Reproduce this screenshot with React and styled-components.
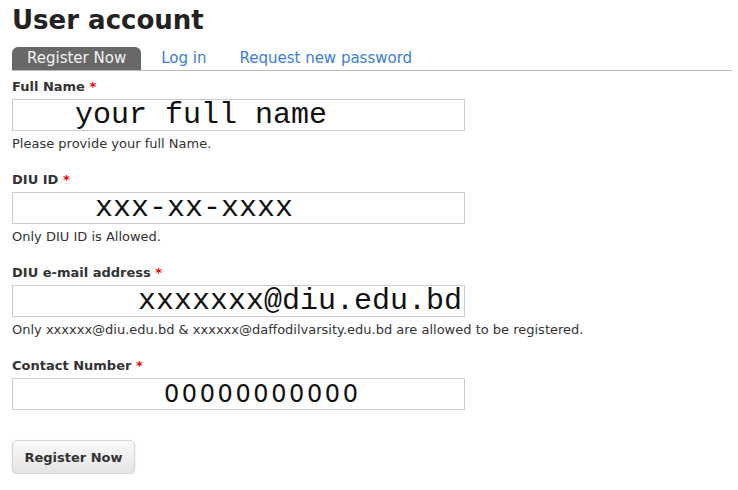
import React from "react";
import styled, { createGlobalStyle } from "styled-components";

const GlobalStyle = createGlobalStyle`
	body {
		margin: 0;
		background: #fff;
		font-family: "DejaVu Sans", Verdana, sans-serif;
		color: #333;
	}
`;

const Page = styled.div`
	width: 720px;
	padding: 0 6px 0 12px;
`;

const Title = styled.h1`
	margin: 0;
	padding-top: 3px;
	font-size: 26px;
	line-height: 34px;
	font-weight: bold;
	color: #222;
`;

const Tabs = styled.ul`
	display: flex;
	list-style: none;
	margin: 10px 0 0 0;
	padding: 0;
	border-bottom: 1px solid #bbb;
`;

const Tab = styled.li`
	height: 23px;
	margin-right: ${(p) => p.$gap}px;
	border-radius: 6px 6px 0 0;
	background: ${(p) => (p.$active ? "#686868" : "transparent")};
	color: ${(p) => (p.$active ? "#f2f2f2" : "#3b7dd8")};
	font-size: 15px;
	line-height: 23px;
	padding-left: ${(p) => (p.$active ? 15 : 5)}px;
	padding-right: ${(p) => (p.$active ? 15 : 0)}px;
`;

const Form = styled.form`
	display: flex;
	flex-direction: column;
	margin-top: 8px;
`;

const Item = styled.div`
	display: flex;
	flex-direction: column;
	margin-bottom: ${(p) => p.$after}px;
`;

const Label = styled.label`
	font-size: 13px;
	line-height: 16px;
	font-weight: bold;
	color: #333;
	margin-bottom: 4px;
`;

const Star = styled.span`
	color: #e00;
`;

const Field = styled.input`
	box-sizing: border-box;
	width: 453px;
	height: 32px;
	margin: 0;
	padding: 0 0 0 ${(p) => p.$indent}px;
	border: 1px solid #ccc;
	background: #fff;
	color: #111;
	font-family: ${(p) =>
		p.$sans ? '"DejaVu Sans", sans-serif' : '"Liberation Mono", "Courier New", monospace'};
	font-size: ${(p) => (p.$sans ? 24 : 30)}px;
	letter-spacing: ${(p) => (p.$sans ? 2.6 : 0)}px;
	outline: none;
`;

const Help = styled.div`
	margin-top: 5px;
	font-size: 13px;
	line-height: 16px;
	color: #333;
`;

const Button = styled.button`
	align-self: flex-start;
	width: 123px;
	height: 34px;
	padding: 0;
	border: 1px solid #d4d4d4;
	border-radius: 5px;
	background: linear-gradient(#fafafa, #e4e4e4);
	box-shadow: 0 1px 2px rgba(0, 0, 0, 0.12);
	font-family: "DejaVu Sans", Verdana, sans-serif;
	font-size: 13px;
	font-weight: bold;
	color: #333;
`;

const fields = [
	{ label: "Full Name", value: "your full name", indent: 62, help: "Please provide your full Name." },
	{ label: "DIU ID", value: "xxx-xx-xxxx", indent: 82, help: "Only DIU ID is Allowed." },
	{
		label: "DIU e-mail address",
		value: "xxxxxxx@diu.edu.bd",
		indent: 125,
		help: "Only xxxxxx@diu.edu.bd & xxxxxx@daffodilvarsity.edu.bd are allowed to be registered.",
	},
	{ label: "Contact Number", value: "00000000000", indent: 151, sans: true },
];

export default function App() {
	return (
		<Page>
			<GlobalStyle />
			<Title>User account</Title>
			<Tabs>
				<Tab $active $gap={15}>Register Now</Tab>
				<Tab $gap={28}>Log in</Tab>
				<Tab $gap={0}>Request new password</Tab>
			</Tabs>
			<Form onSubmit={(e) => e.preventDefault()}>
				{fields.map((f, i) => (
					<Item key={i} $after={f.help ? 20 : 30}>
						<Label>
							{f.label} <Star>*</Star>
						</Label>
						<Field defaultValue={f.value} $indent={f.indent} $sans={f.sans} />
						{f.help && <Help>{f.help}</Help>}
					</Item>
				))}
				<Button type="submit">Register Now</Button>
			</Form>
		</Page>
	);
}
